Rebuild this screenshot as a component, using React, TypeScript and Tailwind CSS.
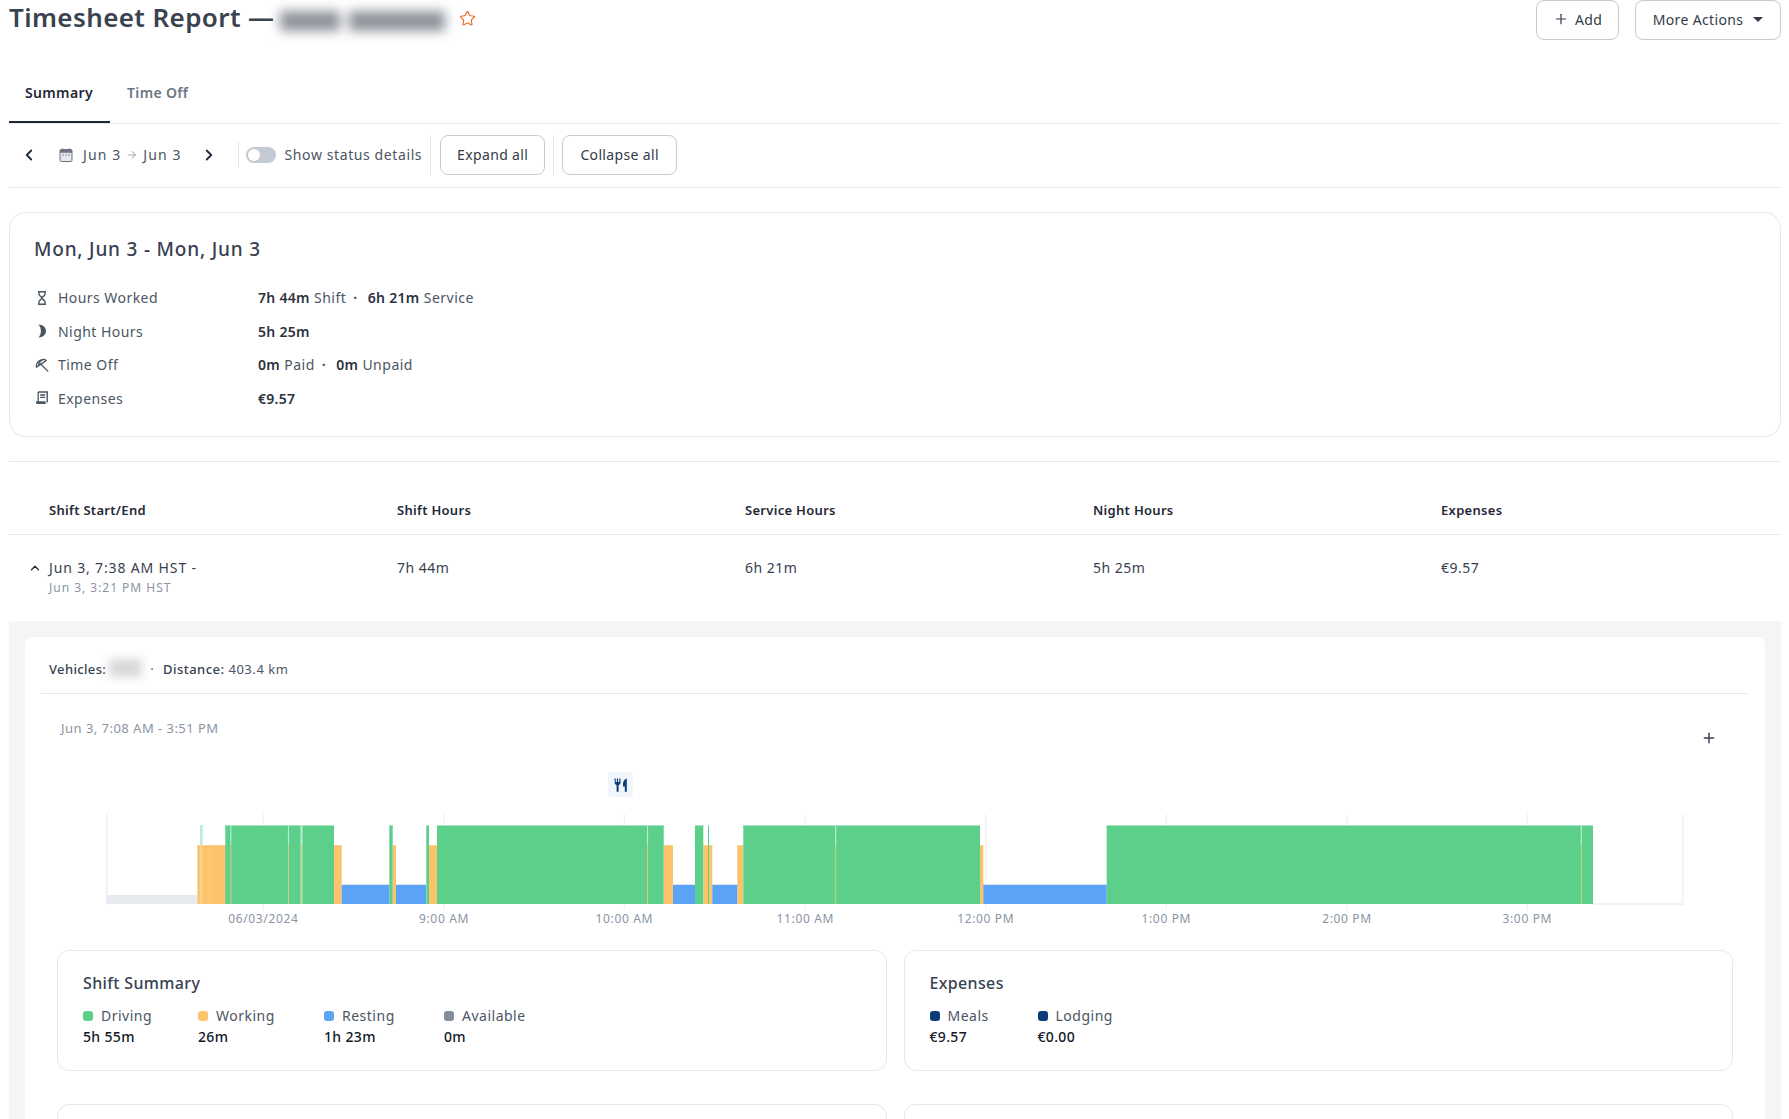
import React from 'react';
import {ChevronLeft, ChevronRight, ChevronUp, ArrowRight, Plus, Star} from 'lucide-react';

const ticks = [
    {x: 263.3, label: '06/03/2024'},
    {x: 444, label: '9:00 AM'},
    {x: 624.3, label: '10:00 AM'},
    {x: 805.3, label: '11:00 AM'},
    {x: 985.7, label: '12:00 PM'},
    {x: 1166.3, label: '1:00 PM'},
    {x: 1347, label: '2:00 PM'},
    {x: 1527.3, label: '3:00 PM'},
];

const working = [[197.3, 226], [334, 341.7], [392.7, 396], [429, 437], [663.7, 673], [703.3, 712.3], [737.3, 743.3], [980, 983.3]];
const resting = [[341.7, 389.3], [396, 426], [673, 695], [712.3, 737.3], [983.3, 1106.7]];
const driving = [[225.3, 300.7], [302.3, 334], [437, 663.7], [695, 703.3], [743.3, 980], [1106.7, 1593]];
const thinDriving = [[389.3, 392.7], [426.3, 429], [708, 709]];
const separators = [230.8, 288.5, 301.5, 647.5, 835.7, 1581.3];

const Rect = ({x0, x1, top, fill, edge}: {x0: number; x1: number; top: number; fill: string; edge: string}) => (
    <g>
        <rect x={x0} y={top} width={x1 - x0} height={904 - top} fill={fill} />
        <rect x={x0} y={top} width={x1 - x0} height={1} fill={edge} />
    </g>
);

const Timeline = () => (
    <svg viewBox="25 765 1740 165" className="block w-[1740px] h-[165px]">
        {ticks.map(t => (
            <g key={t.x}>
                <line x1={t.x} x2={t.x} y1={814} y2={910} stroke="#eceef2" />
                <text x={t.x} y={923} textAnchor="middle" fontSize={12} letterSpacing={0.65} fill="#8b94a4">{t.label}</text>
            </g>
        ))}
        <rect x={106} y={814} width={1.5} height={91} fill="#eceef2" />
        <rect x={1682} y={814} width={1.5} height={91} fill="#f0f1f5" />
        <rect x={1593} y={903} width={90} height={2} fill="#f0f1f5" />
        <rect x={107} y={895} width={90.3} height={9} fill="#e6e9ee" />
        {working.map(([a, b]) => <Rect key={a} x0={a} x1={b} top={845} fill="#fdc36b" edge="#fdd08c" />)}
        {resting.map(([a, b]) => <Rect key={a} x0={a} x1={b} top={884} fill="#5ba3f7" edge="#dfe4f0" />)}
        {driving.map(([a, b]) => <Rect key={a} x0={a} x1={b} top={825} fill="#5ccf8b" edge="#a6e6c3" />)}
        {thinDriving.map(([a, b]) => <Rect key={a} x0={a} x1={b} top={825} fill="#5ccf8b" edge="#a6e6c3" />)}
        <rect x={200} y={825} width={2.7} height={20} fill="#bdeed5" />
        <rect x={200.5} y={845} width={1.5} height={59} fill="#f3d9a5" />
        <rect x={209.5} y={845} width={0.8} height={59} fill="#fdd08c" />
        {separators.map(x => (
            <g key={x}>
                <rect x={x - 0.6} y={825} width={1.2} height={20} fill="#b4ecd0" />
                <rect x={x - 0.5} y={845} width={1} height={59} fill="#dcc98a" />
            </g>
        ))}
        <rect x={608} y={772} width={25} height={25} rx={4} fill="#f1f6fd" />
        <path d="M614.500 778.500h1.200v3.600h1.200v-3.600h1.200v3.600h1.200v-3.600h1.200v4.200c0 1.200-.8 2.100-1.900 2.400v6.600h-2v-6.600c-1.100-.3-1.900-1.200-1.900-2.400z" fill="#0b3d79" />
        <path d="M626.800 778.500c-2.300.5-3.800 2.700-3.800 5.600v2.400h1.800v5.200h2z" fill="#0b3d79" />
    </svg>
);

const CalendarIcon = () => (
    <svg viewBox="0 0 14 14" className="w-[14px] h-[14px]" fill="none">
        <path d="M3.500.5v2M10.500.5v2" stroke="#6b7280" strokeWidth="1.200" />
        <rect x="1" y="1.500" width="12" height="12" rx="1.200" fill="#e5e7eb" stroke="#6b7280" />
        <path d="M1 2.700c0-.6.5-1.200 1.200-1.200h9.600c.7 0 1.200.6 1.200 1.200v2H1z" fill="#6b7280" />
        <path d="M3.500 7h1.500M6.300 7h1.500M9.100 7h1.500" stroke="#6b7280" />
    </svg>
);

const Hourglass = () => (
    <svg viewBox="0 0 14 14" className="w-[14px] h-[14px]" fill="none" stroke="#4b5563" strokeWidth="1.400">
        <path d="M3 .8h8M3 13.200h8M4 .8v2.400c0 1.600 3 2.600 3 3.800s-3 2.200-3 3.800v2.400M10 .8v2.400c0 1.600-3 2.600-3 3.800s3 2.200 3 3.800v2.400" />
    </svg>
);

const Moon = () => (
    <svg viewBox="0 0 14 14" className="w-[14px] h-[14px]" fill="#4b5563">
        <path d="M3.200.5C7.800.5 11 3.400 11 7s-3.200 6.500-7.800 6.500c1.900-1.600 2.700-4 2.700-6.500S5.100 2.100 3.200.5z" />
    </svg>
);

const Umbrella = () => (
    <svg viewBox="0 0 14 14" className="w-[14px] h-[14px]" fill="none" stroke="#4b5563" strokeWidth="1.300" strokeLinejoin="round" strokeLinecap="round">
        <path d="M1.600 9.300C.5 5.600 3.500 1.800 8 1.400c1.300-.1 2.400.3 3.300 1zM3.200 7.800C3.600 5 5.500 2.800 8 1.400M5.400 5.800l7.400 7.300" />
    </svg>
);

const Receipt = () => (
    <svg viewBox="0 0 14 14" className="w-[14px] h-[14px]" fill="none">
        <path d="M3.200 1h9v10.500" stroke="#4b5563" strokeWidth="1.400" />
        <path d="M3.200 1v9.800M5.200 4h5M5.200 6.300h5" stroke="#4b5563" strokeWidth="1.300" />
        <path d="M1 10.300h9.500v1.200c0 .9.5 1.500 1.200 1.500H2.500c-.9 0-1.500-.7-1.500-1.500z" fill="#4b5563" />
    </svg>
);

const Stat = ({icon, label, children}: {icon: React.ReactNode; label: string; children: React.ReactNode}) => (
    <div className="flex items-center h-[33.6px]">
        <div className="w-[14px] flex justify-center">{icon}</div>
        <div className="ml-[9px] w-[200px] text-[#4b5563] tracking-[0.45px]">{label}</div>
        <div className="text-[#4b5563] tracking-[0.5px]">{children}</div>
    </div>
);

const B = ({children}: {children: React.ReactNode}) => <span className="font-semibold text-[#2b3240] tracking-[0.3px]">{children}</span>;

const Dot = () => <span className="ml-[7px] mr-[10px] font-bold text-[#4b5563]">·</span>;

const OutlineButton = ({className, children}: {className?: string; children: React.ReactNode}) => (
    <button className={`h-10 rounded-lg border border-[#c5ccd6] bg-white flex items-center justify-center text-[#343b48] ${className}`}>
        {children}
    </button>
);

const Legend = ({color, label, value, className}: {color: string; label: string; value: string; className: string}) => (
    <div className={className}>
        <div className="flex items-center h-[21px] text-[#4b5563] tracking-[0.5px]">
            <span className={`w-[10px] h-[10px] rounded-[3px] mr-[8px] ${color}`} />
            {label}
        </div>
        <div className="h-[21px] flex items-center font-medium text-[#111827]">{value}</div>
    </div>
);

const columns = ['Shift Start/End', 'Shift Hours', 'Service Hours', 'Night Hours', 'Expenses'];

export default function App() {
    return (
        <div className="h-[1119px] overflow-hidden bg-white pl-[9px] pr-2 text-[14px] tracking-[0.35px] text-[#374151] font-['Noto_Sans',sans-serif]">
            <div className="flex justify-between h-10">
                <div className="flex items-start">
                    <h1 className="text-[26px] leading-[34px] font-semibold text-[#3a4250] tracking-[0.4px]">Timesheet Report —</h1>
                    <div aria-hidden className="ml-[5px] mt-[11px] flex gap-[9px] blur-[6px]">
                        <div className="w-[60px] h-[20px] bg-[#8d9199]" />
                        <div className="w-[96px] h-[20px] bg-[#8d9199]" />
                    </div>
                    <Star className="ml-[14px] mt-[10px] text-[#ee6a2c]" size={17} strokeWidth={1.6} />
                </div>
                <div className="flex gap-4">
                    <OutlineButton className="w-[83px] gap-[6px] pb-[2px]">
                        <Plus size={16} strokeWidth={1.8} />
                        Add
                    </OutlineButton>
                    <OutlineButton className="w-[146px] gap-[10px] pb-[2px]">
                        More Actions
                        <span className="w-0 h-0 border-x-[5px] border-x-transparent border-t-[5px] border-t-[#343b48]" />
                    </OutlineButton>
                </div>
            </div>

            <div className="mt-6 flex h-[60px] border-b border-[#e5e7eb]">
                <div className="w-[101px] h-[59px] border-b-2 border-[#1f2937] pl-4 pt-[19px] font-semibold text-[#1f2937] leading-5">Summary</div>
                <div className="ml-[17px] pt-[19px] font-semibold text-[#6b7585] leading-5">Time Off</div>
            </div>

            <div className="flex items-center h-[64px] pb-[2px] border-b border-[#e5e7eb] text-[#4b5563]">
                <ChevronLeft className="ml-[11px] text-[#1f2937]" size={18} strokeWidth={2.4} />
                <div className="ml-[21px]"><CalendarIcon /></div>
                <span className="ml-[10px] tracking-[1.1px]">Jun 3</span>
                <ArrowRight className="mx-[5px] text-[#9ca3af]" size={12} />
                <span className="tracking-[1.1px]">Jun 3</span>
                <ChevronRight className="ml-[18px] text-[#1f2937]" size={18} strokeWidth={2.4} />
                <div className="ml-[20px] w-px h-[26px] bg-[#e5e7eb]" />
                <div className="ml-[7px] w-[30px] h-4 rounded-full bg-[#c4cad3] p-[2px]">
                    <div className="w-3 h-3 rounded-full bg-white" />
                </div>
                <span className="ml-[9px] tracking-[0.6px]">Show status details</span>
                <div className="ml-2 w-px h-[40px] bg-[#e5e7eb]" />
                <OutlineButton className="ml-[9px] w-[105px]">Expand all</OutlineButton>
                <div className="ml-2 w-px h-[40px] bg-[#e5e7eb]" />
                <OutlineButton className="ml-[8px] w-[115px]">Collapse all</OutlineButton>
            </div>

            <div className="mt-[24px] h-[225px] rounded-2xl border border-[#e5e7eb] pl-[25px] pt-[22px]">
                <div className="h-[28px] leading-[28px] text-[19px] font-medium text-[#374151] tracking-[0.8px] -ml-px">Mon, Jun 3 - Mon, Jun 3</div>
                <div className="mt-[17.800px]">
                    <Stat icon={<Hourglass />} label="Hours Worked"><B>7h 44m</B> Shift<Dot /><B>6h 21m</B> Service</Stat>
                    <Stat icon={<Moon />} label="Night Hours"><B>5h 25m</B></Stat>
                    <Stat icon={<Umbrella />} label="Time Off"><B>0m</B> Paid<Dot /><B>0m</B> Unpaid</Stat>
                    <Stat icon={<Receipt />} label="Expenses"><B>€9.57</B></Stat>
                </div>
            </div>

            <div className="mt-[24px] border-t border-[#e5e7eb]">
                <div className="h-[73px] pt-[26px] pl-10 flex items-center border-b border-[#e5e7eb] text-[13px] font-semibold text-[#1f2937]">
                    {columns.map(c => <div key={c} className="w-[348px] shrink-0 tracking-[0.3px]">{c}</div>)}
                </div>
                <div className="h-[86px] pt-[23px] pl-10 flex relative leading-5 tracking-[0.5px]">
                    <ChevronUp className="absolute left-[19px] top-[26px] text-[#1f2937]" size={14} strokeWidth={2.2} />
                    <div className="w-[348px] shrink-0">
                        <div className="tracking-[0.85px]">Jun 3, 7:38 AM HST -</div>
                        <div className="text-[12px] text-[#8b94a4] tracking-[0.98px]">Jun 3, 3:21 PM HST</div>
                    </div>
                    <div className="w-[348px] shrink-0">7h 44m</div>
                    <div className="w-[348px] shrink-0">6h 21m</div>
                    <div className="w-[348px] shrink-0">5h 25m</div>
                    <div className="w-[348px] shrink-0">€9.57</div>
                </div>
            </div>

            <div className="bg-[#f4f5f7] pt-4 px-4 h-[600px]">
                <div className="bg-white rounded-lg">
                    <div className="ml-4 mr-[17px] h-[57px] pt-[22px] pl-2 border-b border-[#e5e7eb] flex text-[13px] leading-5 text-[#4b5563]">
                        <span className="font-medium text-[#374151]">Vehicles:</span>
                        <div aria-hidden className="ml-[3px] mr-[3px] w-[33px] h-[18px] bg-[#d8d8d8] blur-[5px]" />
                        <span className="ml-[5px] mr-[9px]">·</span>
                        <span className="font-medium text-[#374151] tracking-[0.45px]">Distance:</span>
                        <span className="ml-1 tracking-[0.55px]">403.4 km</span>
                    </div>
                    <div className="flex justify-between h-[71px] pl-[36px] pr-[48px] pt-[24px]">
                        <span className="text-[13px] leading-5 text-[#8b94a4] tracking-[0.47px]">Jun 3, 7:08 AM - 3:51 PM</span>
                        <Plus className="mt-[12px] text-[#374151]" size={16} strokeWidth={2.2} />
                    </div>
                    <Timeline />
                    <div className="mt-5 mx-8 grid grid-cols-2 gap-[17px]">
                        <div className="h-[121px] rounded-xl border border-[#e5e7eb] pl-[25px] pt-[20px]">
                            <div className="text-[16px] leading-6 font-medium text-[#374151]">Shift Summary</div>
                            <div className="mt-[10px] flex">
                                <Legend className="w-[115px]" color="bg-[#5ccf8b]" label="Driving" value="5h 55m" />
                                <Legend className="w-[126px]" color="bg-[#fdc36b]" label="Working" value="26m" />
                                <Legend className="w-[120px]" color="bg-[#5ba3f7]" label="Resting" value="1h 23m" />
                                <Legend className="w-[121px]" color="bg-[#838d9c]" label="Available" value="0m" />
                            </div>
                        </div>
                        <div className="h-[121px] rounded-xl border border-[#e5e7eb] pl-[25px] pt-[20px]">
                            <div className="text-[16px] leading-6 font-medium text-[#374151]">Expenses</div>
                            <div className="mt-[10px] flex">
                                <Legend className="w-[108px]" color="bg-[#0b3d79]" label="Meals" value="€9.57" />
                                <Legend className="w-[108px]" color="bg-[#0b3d79]" label="Lodging" value="€0.00" />
                            </div>
                        </div>
                        <div className="h-[121px] rounded-xl border border-[#e5e7eb] mt-4" />
                        <div className="h-[121px] rounded-xl border border-[#e5e7eb] mt-4" />
                    </div>
                </div>
            </div>
        </div>
    );
}
